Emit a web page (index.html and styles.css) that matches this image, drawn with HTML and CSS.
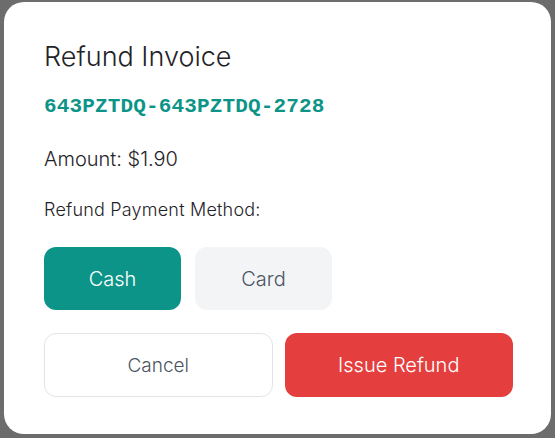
FILE: index.html
```html
<!DOCTYPE html>
<html lang="en">
<head>
    <meta charset="utf-8">
    <meta name="viewport" content="width=device-width, initial-scale=1">
    <link rel="stylesheet" href="styles.css">
    <title>Refund Invoice</title>
</head>
<body>
    <div class="modal">
        <h2 class="title">Refund Invoice</h2>
        <div class="code">643PZTDQ-643PZTDQ-2728</div>
        <div class="amount">Amount: $1.90</div>
        <div class="label">Refund Payment Method:</div>
        <div class="methods">
            <button class="method active">Cash</button>
            <button class="method">Card</button>
        </div>
        <div class="actions">
            <button class="btn cancel">Cancel</button>
            <button class="btn refund">Issue Refund</button>
        </div>
    </div>
</body>
</html>
```

FILE: styles.css
```css
* { margin: 0; padding: 0; box-sizing: border-box; }
html, body { height: 100%; width: 100%; }
body { background: #6c6c6c; font-family: Inter, "Noto Sans", sans-serif; overflow: hidden; }
.modal { width: 547px; height: 432px; margin: 2px 0 0 4px; background: white; border-radius: 20px; padding: 39px 38px 0 40px; color: #1f2328; }
.title { font-size: 27px; font-weight: 300; line-height: 32px; letter-spacing: 0; }
.code { margin-top: 21px; font-family: "Liberation Mono", monospace; font-weight: bold; font-size: 21px; line-height: 26px; letter-spacing: 0.15px; color: #0d9488; }
.amount { margin-top: 26px; font-size: 20px; font-weight: 300; line-height: 26px; }
.label { margin-top: 26px; font-size: 18px; font-weight: 300; line-height: 24px; letter-spacing: 0.2px; }
.methods { display: flex; gap: 14px; margin-top: 25px; }
.method { width: 137px; height: 63px; border: none; border-radius: 12px; background: #f3f4f6; color: #4b5563; font-family: inherit; font-size: 20px; font-weight: 300; }
.method.active { background: #0d9488; color: white; }
.actions { display: flex; gap: 12px; margin-top: 23px; }
.btn { width: 229px; height: 64px; border-radius: 12px; font-family: inherit; font-size: 19px; font-weight: 300; }
.cancel { background: white; border: 1px solid #e2e4e8; color: #4b5563; }
.refund { background: #e53e3e; border: none; color: white; font-size: 20px; }
```
